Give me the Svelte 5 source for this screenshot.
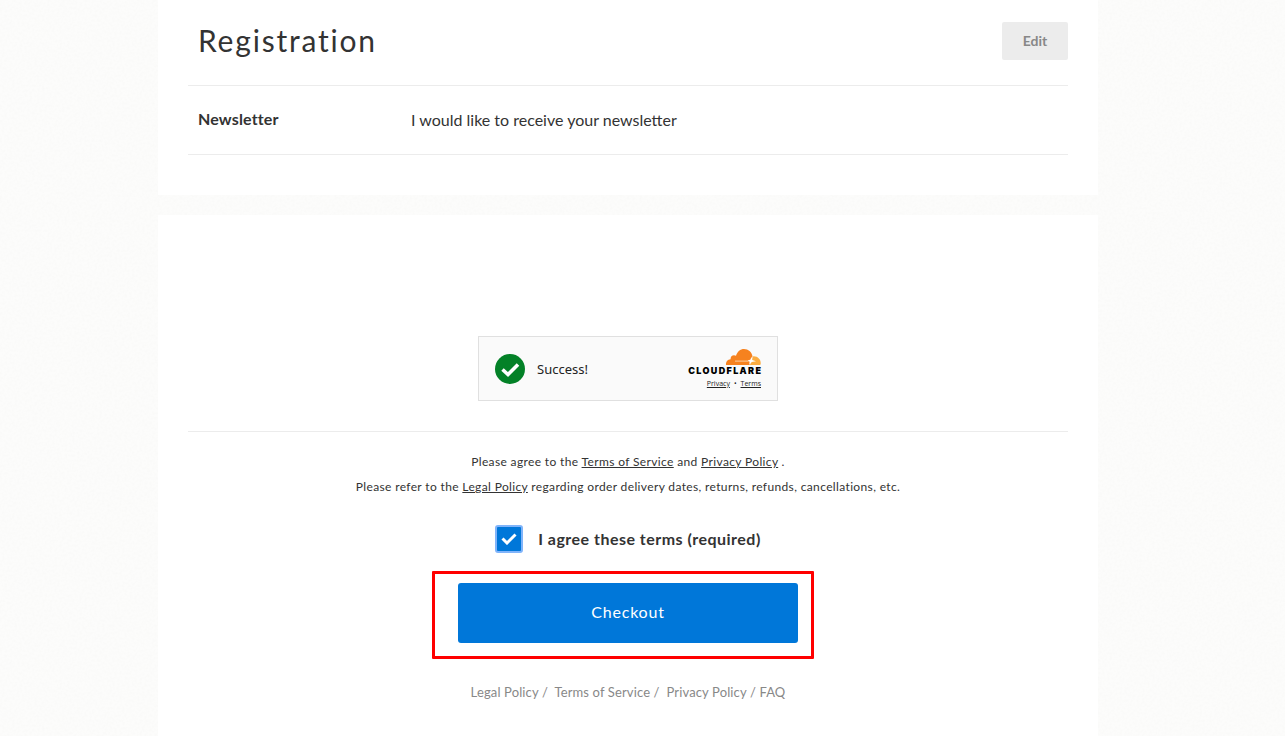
<script lang="ts">
	interface FooterLink {
		label: string;
		href: string;
	}

	const footerLinks: FooterLink[] = [
		{ label: 'Legal Policy', href: '#legal' },
		{ label: 'Terms of Service', href: '#terms' },
		{ label: 'Privacy Policy', href: '#privacy' },
		{ label: 'FAQ', href: '#faq' }
	];

	// The last separator is tighter than the others
	const separators = ['\u00a0/\u00a0 ', '\u00a0/\u00a0 ', ' / ', ''];

	let agreed = $state(true);
</script>

<div class="page">
	<svg class="paper" aria-hidden="true">
		<filter id="grain">
			<feTurbulence type="fractalNoise" baseFrequency="0.4" numOctaves="2" />
			<feColorMatrix values="0 0 0 0 0.5  0 0 0 0 0.5  0 0 0 0 0.45  0.08 0 0 0 -0.03" />
		</filter>
		<rect width="100%" height="100%" filter="url(#grain)" />
	</svg>

	<main class="content">
		<section class="card registration">
			<header class="card-header">
				<h1>Registration</h1>
				<button class="edit" type="button">Edit</button>
			</header>
			<dl class="row">
				<dt>Newsletter</dt>
				<dd>I would like to receive your newsletter</dd>
			</dl>
		</section>

		<section class="card confirm">
			<div class="turnstile">
				<svg class="success-icon" viewBox="0 0 30 30" aria-hidden="true">
					<circle cx="15" cy="15" r="15" fill="#038127" />
					<path d="M7.5 15.5 L13 20.5 L23 10.5" fill="none" stroke="#fff" stroke-width="3.6" />
				</svg>
				<span class="success-text">Success!</span>
				<div class="brand">
					<svg class="cloud" viewBox="0 0 36 16" aria-hidden="true">
						<path
							fill="#f6821f"
							d="M1 16 C.7 12.8 2.6 10.4 5.6 10.2 C5.2 7.1 8.4 5.2 11 6.8 C12.4 2.5 15.3 0 19 0 C23.3 0 26.7 3.1 27.5 7.2 L25 16 Z"
						/>
						<path
							fill="#fbad41"
							d="M25 16 L28 7.4 C32.3 6.9 36 10.3 35.7 15 C35.6 15.6 35.3 16 34.8 16 Z"
						/>
						<path fill="#fbc08a" d="M10 11.5 H24 L23.7 12.7 H10 Z" />
						<path fill="#fff" d="M26.6 7.7 L27.3 11 L31 12.2 L26.8 12.9 L24.2 16 L24.6 12.8 L22.8 11.3 L25.3 10.7 Z" />
					</svg>
					<span class="wordmark">CLOUDFLARE</span>
					<span class="brand-links">
						<a href="#cf-privacy">Privacy</a>
						<span>•</span>
						<a href="#cf-terms">Terms</a>
					</span>
				</div>
			</div>

			<div class="terms">
				<p>
					Please agree to the <a href="#terms">Terms of Service</a> and
					<a href="#privacy">Privacy Policy</a> .
				</p>
				<p>
					Please refer to the <a href="#legal">Legal Policy</a> regarding order delivery dates, returns,
					refunds, cancellations, etc.
				</p>
			</div>

			<label class="agree">
				<span class="checkbox">
					<input type="checkbox" bind:checked={agreed} />
					{#if agreed}
						<svg class="tick" viewBox="0 0 16 12" aria-hidden="true">
							<path d="M1.5 5.5 L6 10 L14.5 1.5" fill="none" stroke="#fff" stroke-width="3" />
						</svg>
					{/if}
				</span>
				<span class="agree-text">I agree these terms (required)</span>
			</label>

			<div class="checkout-wrap">
				<button class="checkout" type="button">Checkout</button>
				<span class="highlight"></span>
			</div>

			<nav class="footer-links">
				{#each footerLinks as link, i}<a href={link.href}>{link.label}</a>{separators[i]}{/each}
			</nav>
		</section>
	</main>
</div>

<style>
	:global(body) {
		margin: 0;
		background: #fcfcfb;
	}

	.page {
		position: relative;
		min-height: 100vh;
		box-sizing: border-box;
		padding-right: 29px;
		display: flex;
		justify-content: center;
		font-family: Lato, 'Liberation Sans', sans-serif;
		font-size: 16px;
		color: #333;
	}

	/* Paper grain behind the cards */
	.paper {
		position: absolute;
		inset: 0;
		width: 100%;
		height: 100%;
	}

	.content {
		position: relative;
		width: 100%;
		max-width: 940px;
		display: flex;
		flex-direction: column;
		gap: 20px;
	}

	.card {
		background: #fff;
		padding: 0 30px;
	}

	.registration {
		padding-bottom: 40px;
	}

	.card-header {
		display: flex;
		align-items: flex-start;
		justify-content: space-between;
		padding: 22px 0 25px 10px;
		border-bottom: 1px solid #ececec;
	}

	h1 {
		margin: 0;
		font-size: 30px;
		line-height: 36px;
		font-weight: 400;
		letter-spacing: 0.06em;
	}

	.edit {
		min-width: 66px;
		height: 38px;
		padding: 0 20px;
		border: none;
		border-radius: 2px;
		background: #ececec;
		color: #888;
		font: 700 14px/38px Lato, sans-serif;
		cursor: pointer;
	}

	.row {
		display: grid;
		grid-template-columns: 213px 1fr;
		margin: 0;
		padding: 22px 10px;
		border-bottom: 1px solid #ececec;
		line-height: 24px;
	}

	dt {
		font-weight: 700;
		line-height: 22px;
		letter-spacing: 0.01em;
	}

	dd {
		margin: 0;
	}

	.confirm {
		flex: 1;
		display: flex;
		flex-direction: column;
		align-items: center;
		padding-top: 121px;
		padding-bottom: 32px;
	}

	.turnstile {
		display: flex;
		align-items: center;
		box-sizing: border-box;
		width: 300px;
		height: 65px;
		padding: 0 16px;
		border: 1px solid #e0e0e0;
		background: #fafafa;
		color: #232323;
	}

	.success-icon {
		width: 30px;
		height: 30px;
		margin-right: 12px;
	}

	.success-text {
		font: 13px/20px 'Noto Sans', sans-serif;
	}

	.brand {
		margin-left: auto;
		padding-top: 2px;
		display: flex;
		flex-direction: column;
		align-items: flex-end;
	}

	.cloud {
		width: 36px;
		height: 16px;
	}

	.wordmark {
		font: 900 9px/12px Inter, sans-serif;
		letter-spacing: 0.15em;
		/* drop the tracking after the last letter */
		margin-right: -0.15em;
		color: #000;
	}

	.brand-links {
		display: flex;
		gap: 4px;
		font: 7px/14px 'Open Sans', 'Noto Sans', sans-serif;
	}

	a {
		color: inherit;
	}

	.terms {
		align-self: stretch;
		margin-top: 30px;
		padding-top: 17px;
		border-top: 1px solid #ececec;
		font-size: 12px;
		line-height: 25px;
		letter-spacing: 0.03em;
		text-align: center;
	}

	.terms p {
		margin: 0;
	}

	.agree {
		display: flex;
		align-items: center;
		gap: 15px;
		margin-top: 26px;
		font-weight: 700;
		letter-spacing: 0.03em;
		cursor: pointer;
	}

	.agree-text {
		padding-bottom: 2px;
	}

	.checkbox {
		display: grid;
		place-items: center;
	}

	.checkbox input,
	.tick {
		grid-area: 1 / 1;
	}

	.checkbox input {
		appearance: none;
		width: 28px;
		height: 28px;
		margin: 0;
		border: 2px solid #ccc;
		border-radius: 3px;
		background: #fff;
	}

	.checkbox input:checked {
		border-color: #80b4fa;
		background: #0077d9;
	}

	.tick {
		width: 16px;
		height: 12px;
		pointer-events: none;
	}

	.checkout-wrap {
		position: relative;
		width: 340px;
		max-width: 100%;
		margin-top: 30px;
	}

	.checkout {
		width: 100%;
		height: 60px;
		padding: 0 0 2px;
		border: none;
		border-radius: 3px;
		background: #0077d9;
		color: #fff;
		font: 400 16px/20px Lato, sans-serif;
		letter-spacing: 0.05em;
		cursor: pointer;
	}

	.highlight {
		position: absolute;
		inset: -12px -16px -16px -26px;
		border: 3px solid #f00;
		border-radius: 1px;
		pointer-events: none;
	}

	.footer-links {
		margin-top: 39px;
		font-size: 13px;
		line-height: 20px;
		letter-spacing: 0.01em;
		color: #888;
	}

	.footer-links a {
		text-decoration: none;
	}
</style>
